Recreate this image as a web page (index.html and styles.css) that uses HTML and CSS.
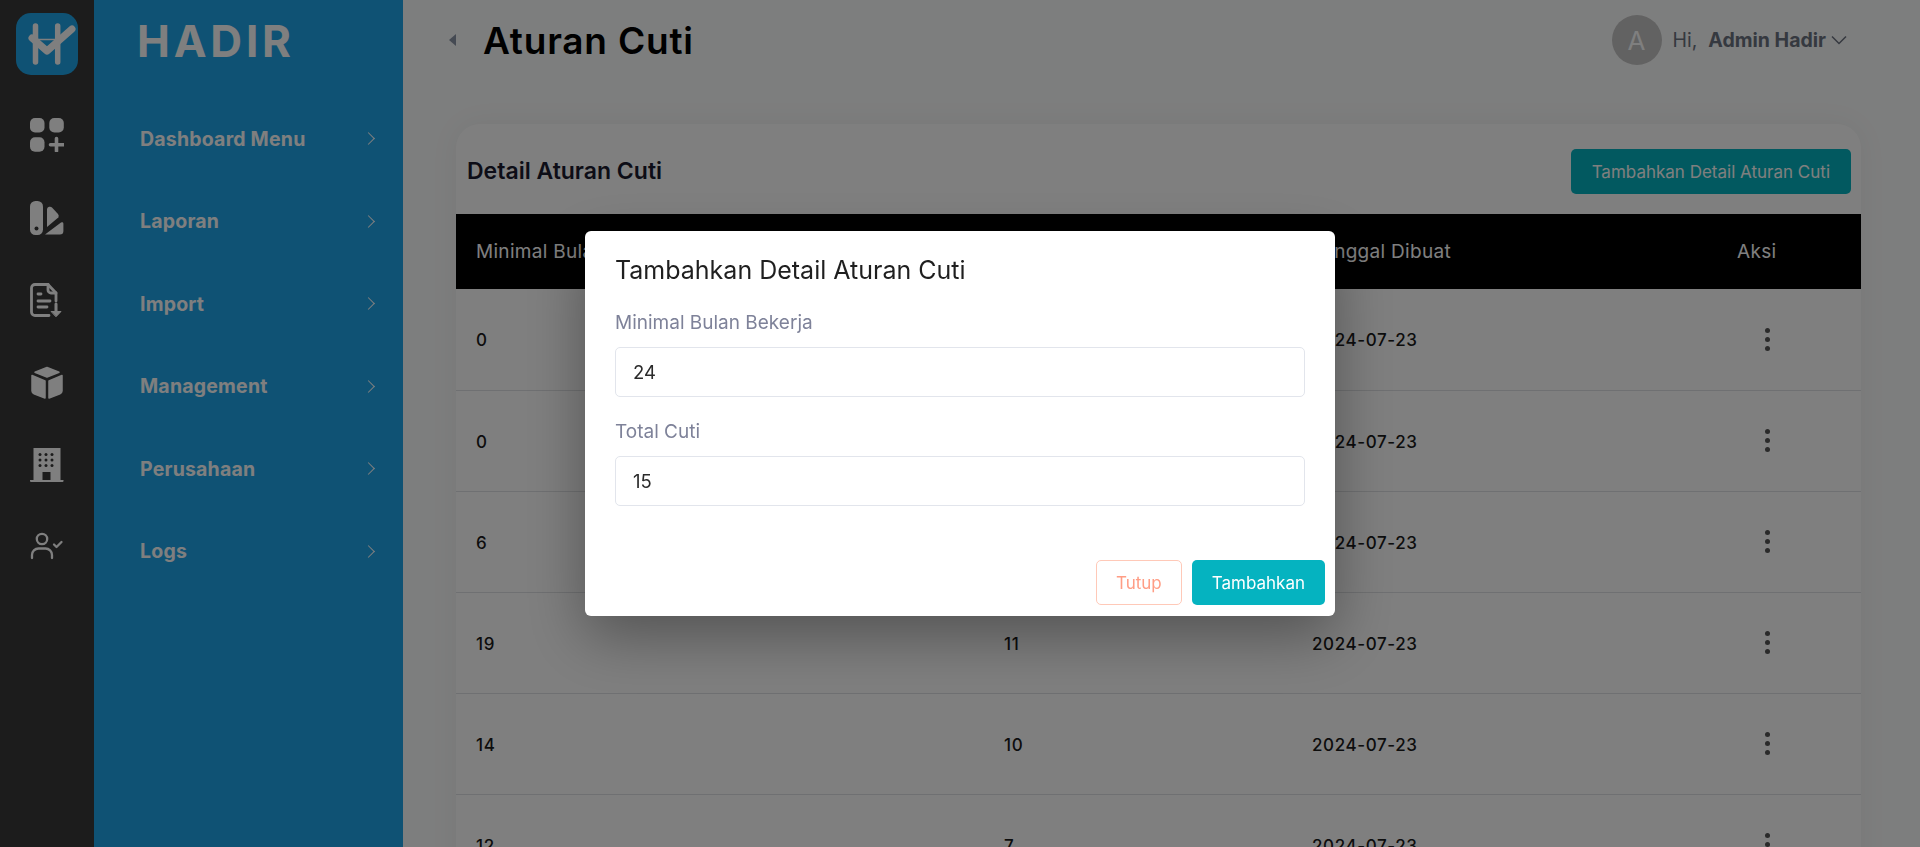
FILE: index.html
```html
<!DOCTYPE html>
<html lang="en">
<head>
  <meta charset="UTF-8">
  <meta name="viewport" content="width=device-width, initial-scale=1.0">
  <title>Aturan Cuti || Hadir</title>
  <link rel="stylesheet" href="styles.css">
</head>
<body>
  <div class="app-wrap">
    <aside class="rail">
      <div class="rail-logo">
        <svg width="62" height="62" viewBox="0 0 62 62" fill="none" stroke="#fff" stroke-linecap="round" stroke-linejoin="round">
          <path d="M19.500 13v36M41.700 13v36" stroke-width="5.500"/>
          <path d="M22 26.500h17" stroke-width="1.500"/>
          <path d="M16 25l15 13 25-22" stroke-width="7"/>
        </svg>
      </div>
      <svg class="rail-icon" width="34" height="34" viewBox="0 0 34 34" fill="#fff">
        <rect width="14.500" height="14.500" rx="5"/>
        <rect x="19.300" width="14.500" height="14.500" rx="5"/>
        <rect y="19.300" width="14.500" height="14.500" rx="5"/>
        <path d="M26.500 20.500v12.500M20.500 26.700h13" stroke="#fff" stroke-width="3.600" stroke-linecap="round"/>
      </svg>
      <svg class="rail-icon" width="34" height="34" viewBox="0 0 34 34" fill="#fff">
        <rect width="13" height="34" rx="5.500"/>
        <circle cx="6.500" cy="27.500" r="2" fill="#383838"/>
        <path d="M17 8a3 3 0 0 1 5-1.500l6 6.500a3 3 0 0 1 .3 3.500L17 26z"/>
        <path d="M15 33.500L31 21.500a1.500 1.500 0 0 1 2.400 1.200v7.300a3.500 3.500 0 0 1-3.500 3.500z"/>
      </svg>
      <svg class="rail-icon" width="34" height="34" viewBox="0 0 34 34" fill="none" stroke="#fff" stroke-width="2.800" stroke-linecap="round" stroke-linejoin="round">
        <path d="M18 1.500H5a3.500 3.500 0 0 0-3.500 3.500v24A3.500 3.500 0 0 0 5 32.500h14"/>
        <path d="M18 1.500l8 8.500v8"/>
        <path d="M18 2v5a3 3 0 0 0 3 3h5"/>
        <path d="M8 11h3M8 18h12M8 24h9"/>
        <path d="M26 21v9" stroke-width="3"/>
        <path d="M21.500 28.500h9.500L26.200 33.500z" fill="#fff" stroke-width="1"/>
      </svg>
      <svg class="rail-icon" width="34" height="34" viewBox="0 0 34 34" fill="#fff" stroke="#fff" stroke-width="1.500" stroke-linejoin="round">
        <path d="M17 1.500l12 4.700-12 4.800-12-4.800z"/>
        <path d="M2 9.500l13 5.500v17l-11-4.300a3 3 0 0 1-2-2.700z"/>
        <path d="M32 9.500l-13 5.500v17l11-4.300a3 3 0 0 0 2-2.700z"/>
      </svg>
      <svg class="rail-icon" width="34" height="34" viewBox="0 0 34 34">
        <path fill="#fff" d="M3.500 0h27v32h3v1a1 1 0 0 1-1 1H1a1 1 0 0 1-1-1v-1h3.500z"/>
        <g fill="#383838">
          <circle cx="10" cy="6.500" r="1.500"/><circle cx="16" cy="6.500" r="1.500"/><circle cx="22" cy="6.500" r="1.500"/>
          <circle cx="10" cy="12" r="1.500"/><circle cx="16" cy="12" r="1.500"/><circle cx="22" cy="12" r="1.500"/>
          <circle cx="10" cy="17.500" r="1.500"/><circle cx="16" cy="17.500" r="1.500"/><circle cx="22" cy="17.500" r="1.500"/>
          <rect x="12.500" y="24" width="8" height="8"/>
        </g>
      </svg>
      <svg class="rail-icon" width="34" height="34" viewBox="0 0 34 34" fill="none" stroke="#fff" stroke-width="2.300" stroke-linecap="round" stroke-linejoin="round">
        <circle cx="12" cy="8" r="5.200"/>
        <path d="M2 27v-3a6.500 6.500 0 0 1 6.500-6.500h7a6.500 6.500 0 0 1 6.500 6.500v3"/>
        <path d="M24 13.500l2.500 2.500 5-5"/>
      </svg>
    </aside>

    <nav class="sidebar">
      <div class="brand">HADIR</div>
      <ul class="menu">
        <li><span>Dashboard Menu</span><i class="chev"></i></li>
        <li><span>Laporan</span><i class="chev"></i></li>
        <li><span>Import</span><i class="chev"></i></li>
        <li><span>Management</span><i class="chev"></i></li>
        <li><span>Perusahaan</span><i class="chev"></i></li>
        <li><span>Logs</span><i class="chev"></i></li>
      </ul>
    </nav>

    <main>
      <header class="topbar">
        <div class="title-wrap">
          <i class="caret"></i>
          <h1>Aturan Cuti</h1>
        </div>
        <div class="user">
          <div class="avatar">A</div>
          <span class="hi">Hi,</span>
          <b>Admin Hadir</b>
          <svg width="16" height="10" viewBox="0 0 16 10" fill="none" stroke="#6b7280" stroke-width="1.500"><path d="M1 1.500l7 7 7-7"/></svg>
        </div>
      </header>

      <section class="card">
        <div class="card-head">
          <h2>Detail Aturan Cuti</h2>
          <button class="btn btn-teal">Tambahkan Detail Aturan Cuti</button>
        </div>
        <table>
          <thead>
            <tr><th class="c1">Minimal Bulan Bekerja</th><th class="c2">Total Cuti</th><th class="c3">Tanggal Dibuat</th><th class="c4">Aksi</th></tr>
          </thead>
          <tbody>
            <tr><td>0</td><td>5</td><td>2024-07-23</td><td class="act"><i class="dots"></i></td></tr>
            <tr><td>0</td><td>6</td><td>2024-07-23</td><td class="act"><i class="dots"></i></td></tr>
            <tr><td>6</td><td>8</td><td>2024-07-23</td><td class="act"><i class="dots"></i></td></tr>
            <tr><td>19</td><td>11</td><td>2024-07-23</td><td class="act"><i class="dots"></i></td></tr>
            <tr><td>14</td><td>10</td><td>2024-07-23</td><td class="act"><i class="dots"></i></td></tr>
            <tr><td>12</td><td>7</td><td>2024-07-23</td><td class="act"><i class="dots"></i></td></tr>
          </tbody>
        </table>
      </section>
    </main>
  </div>

  <div class="overlay">
    <div class="modal">
      <h3>Tambahkan Detail Aturan Cuti</h3>
      <label>Minimal Bulan Bekerja</label>
      <div class="input">24</div>
      <label>Total Cuti</label>
      <div class="input">15</div>
      <div class="modal-foot">
        <button class="btn btn-outline">Tutup</button>
        <button class="btn btn-teal">Tambahkan</button>
      </div>
    </div>
  </div>
</body>
</html>
```

FILE: styles.css
```css
* {
  margin: 0;
  padding: 0;
  box-sizing: border-box;
}

body {
  font-family: 'Inter', 'Liberation Sans', sans-serif;
  height: 847px;
  overflow: hidden;
  background: #fbfcfc;
}

.app-wrap {
  display: flex;
  height: 847px;
  overflow: hidden;
}

/* icon rail */
.rail {
  width: 94px;
  flex: none;
  background: #383838;
  display: flex;
  flex-direction: column;
  align-items: center;
  padding-top: 13px;
}

.rail-logo {
  width: 62px;
  height: 62px;
  border-radius: 15px;
  background: #1ea5e9;
  margin-bottom: 43px;
}

.rail-icon {
  flex: none;
  margin-bottom: 48.5px;
}

/* menu */
.sidebar {
  width: 309px;
  flex: none;
  background: #1fa5e9;
  color: #fff;
}

.brand {
  height: 82px;
  padding: 15px 0 0 43px;
  font-size: 44px;
  line-height: 53px;
  font-weight: 700;
  letter-spacing: 3.8px;
}

.menu {
  list-style: none;
  padding-top: 15.5px;
}

.menu li {
  height: 82.5px;
  display: flex;
  align-items: center;
  justify-content: space-between;
  padding: 0 30px 0 46px;
  font-size: 19.5px;
  font-weight: 700;
  letter-spacing: 0.2px;
}

.chev {
  width: 9px;
  height: 9px;
  border-top: 1.5px solid #fff;
  border-right: 1.5px solid #fff;
  transform: rotate(45deg);
}

/* main */
main {
  flex: 1;
  padding: 0 59px 0 53px;
}

.topbar {
  height: 124px;
  display: flex;
  justify-content: space-between;
  align-items: flex-start;
  padding-top: 15px;
}

.title-wrap {
  display: flex;
  align-items: center;
  height: 50px;
}

.caret {
  width: 0;
  height: 0;
  border-top: 6px solid transparent;
  border-bottom: 6px solid transparent;
  border-right: 7px solid #8a94a6;
  margin: 0 27px 0 -7px;
}

h1 {
  font-size: 37px;
  font-weight: 600;
  letter-spacing: 0.8px;
  color: #000;
}

.user {
  display: flex;
  align-items: center;
  font-size: 19.5px;
  color: #6b7280;
  margin-right: 14px;
}

.avatar {
  width: 50px;
  height: 50px;
  border-radius: 50%;
  background: #c4c4c4;
  color: #fff;
  font-size: 26px;
  display: flex;
  align-items: center;
  justify-content: center;
  margin-right: 11px;
}

.hi {
  margin-right: 11px;
}

.user b {
  font-weight: 700;
  margin-right: 5px;
}

.card {
  background: #fff;
  border-radius: 24px 24px 0 0;
  box-shadow: 0 0 30px rgba(0, 0, 0, 0.05);
}

.card-head {
  height: 90px;
  display: flex;
  justify-content: space-between;
  align-items: center;
  padding: 5px 10px 0 11px;
}

h2 {
  font-size: 23px;
  font-weight: 600;
  margin-top: -2px;
  color: #1a1a2e;
}

.btn {
  height: 45px;
  border-radius: 5px;
  border: 1px solid transparent;
  font-family: inherit;
  font-size: 17px;
  padding: 0 20px;
}

.btn-teal {
  background: #05b3c0;
  color: #fff;
}

.btn-outline {
  background: #fff;
  border-color: #ffc9b8;
  color: #ff9d85;
}

table {
  width: 100%;
  border-collapse: collapse;
  table-layout: fixed;
}

th {
  background: #000;
  color: #fff;
  height: 75px;
  font-size: 19px;
  font-weight: 400;
  letter-spacing: 0.3px;
  text-align: left;
  padding-left: 20px;
}

.c1 { width: 528px; }
.c2 { width: 308px; }
.c3 { width: 425px; }

td {
  height: 101px;
  padding: 2px 0 0 20px;
  font-size: 17px;
  font-weight: 500;
  letter-spacing: 0.6px;
  color: #1a1a1a;
  border-bottom: 1px solid #dfe1e4;
}

td.act {
  padding: 0 0 0 48px;
}

.dots {
  display: block;
  width: 5px;
  height: 5px;
  border-radius: 50%;
  background: #555;
  box-shadow: 0 -9px 0 #555, 0 9px 0 #555;
}

/* modal */
.overlay {
  position: fixed;
  inset: 0;
  background: rgba(0, 0, 0, 0.5);
  display: flex;
  justify-content: center;
  align-items: flex-start;
  padding-top: 231px;
}

.modal {
  width: 750px;
  height: 385px;
  background: #fff;
  border-radius: 6px;
  padding: 23px 30px 0;
  box-shadow: 0 20px 60px rgba(0, 0, 0, 0.35);
}

h3 {
  font-size: 25px;
  line-height: 32px;
  font-weight: 400;
  color: #1f1f1f;
  margin-bottom: 25px;
}

label {
  display: block;
  font-size: 19px;
  line-height: 24px;
  color: #7e8299;
  margin-bottom: 12px;
}

.input {
  height: 50px;
  border: 1px solid #e2e5ec;
  border-radius: 5px;
  font-size: 18.5px;
  line-height: 48px;
  padding-left: 17px;
  color: #2b2b2b;
  margin-bottom: 23px;
}

.modal-foot {
  display: flex;
  justify-content: flex-end;
  gap: 10px;
  margin: 54px -20px 0 0;
}

.modal-foot .btn {
  padding: 0 19px;
}
```
